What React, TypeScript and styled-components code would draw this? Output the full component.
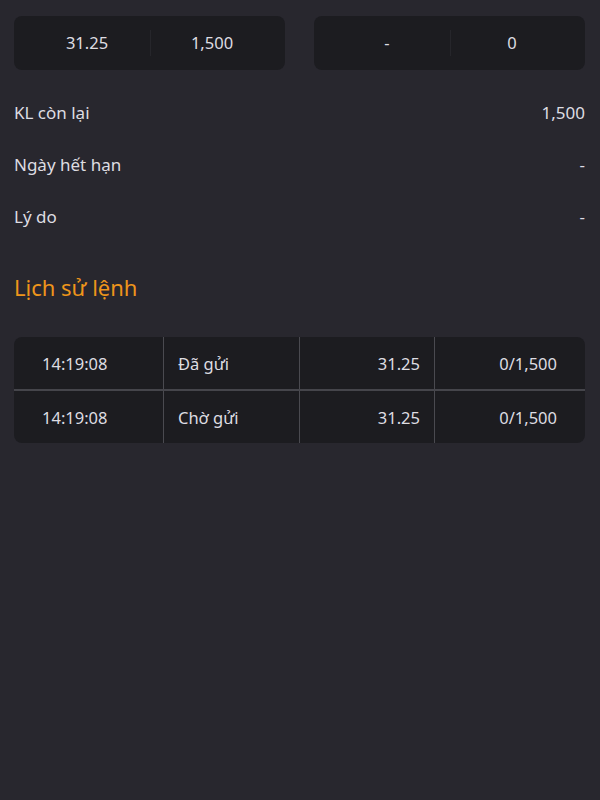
import React from "react";
import styled, { createGlobalStyle } from "styled-components";

const Global = createGlobalStyle`
  html, body { margin: 0; padding: 0; background: #28272e; }
  body { font-family: "Noto Sans", "Liberation Sans", sans-serif; color: #dedde2; }
  #root { min-height: 800px; background: #28272e; }
`;

const Page = styled.div`
  padding: 16px 15px 0 14px;
  display: flex;
  flex-direction: column;
`;

const CardRow = styled.div`
  display: grid;
  grid-template-columns: 1fr 1fr;
  gap: 29px;
`;

const Card = styled.div`
  height: 54px;
  background: #1c1c20;
  border-radius: 8px;
  display: grid;
  grid-template-columns: 136px 1fr;
  align-items: center;
`;

const CardCell = styled.div<{ $side: "l" | "r" }>`
  text-align: center;
  font-size: 16.5px;
  padding: ${(p) => (p.$side === "l" ? "0 0 0 10px" : "0 12px 0 0")};
  border-left: ${(p) => (p.$side === "r" ? "1px solid #26262b" : "none")};
  line-height: 26px;
`;

const InfoList = styled.div`
  margin-top: 16px;
  display: flex;
  flex-direction: column;
`;

const InfoRow = styled.div`
  height: 52px;
  display: flex;
  align-items: center;
  justify-content: space-between;
  font-size: 17px;
`;

const Title = styled.h2`
  margin: 30px 0 0;
  font-size: 22px;
  line-height: 30px;
  font-weight: 400;
  color: #ee951b;
`;

const Table = styled.div`
  margin-top: 35px;
  background: #1c1c20;
  border-radius: 8px;
  overflow: hidden;
`;

const TRow = styled.div<{ $first?: boolean }>`
  display: grid;
  grid-template-columns: 150px 136px 135px 1fr;
  height: 52px;
  border-top: ${(p) => (p.$first ? "none" : "2px solid #45454b")};
`;

const TCell = styled.div<{ $align: "left" | "right"; $pad: string; $last?: boolean }>`
  display: flex;
  align-items: center;
  justify-content: ${(p) => (p.$align === "left" ? "flex-start" : "flex-end")};
  padding: ${(p) => p.$pad};
  font-size: 16.5px;
  border-right: ${(p) => (p.$last ? "none" : "1px solid #4a4a50")};
`;

const history = [
  { time: "14:19:08", status: "Đã gửi", price: "31.25", qty: "0/1,500" },
  { time: "14:19:08", status: "Chờ gửi", price: "31.25", qty: "0/1,500" },
];

export default function App() {
  return (
    <>
      <Global />
      <Page>
        <CardRow>
          <Card>
            <CardCell $side="l">31.25</CardCell>
            <CardCell $side="r">1,500</CardCell>
          </Card>
          <Card>
            <CardCell $side="l">-</CardCell>
            <CardCell $side="r">0</CardCell>
          </Card>
        </CardRow>
        <InfoList>
          <InfoRow>
            <span>KL còn lại</span>
            <span>1,500</span>
          </InfoRow>
          <InfoRow>
            <span>Ngày hết hạn</span>
            <span>-</span>
          </InfoRow>
          <InfoRow>
            <span>Lý do</span>
            <span>-</span>
          </InfoRow>
        </InfoList>
        <Title>Lịch sử lệnh</Title>
        <Table>
          {history.map((h, i) => (
            <TRow key={i} $first={i === 0}>
              <TCell $align="left" $pad="0 0 0 28px">{h.time}</TCell>
              <TCell $align="left" $pad="0 0 0 14px">{h.status}</TCell>
              <TCell $align="right" $pad="0 14px 0 0">{h.price}</TCell>
              <TCell $align="right" $pad="0 28px 0 0" $last>{h.qty}</TCell>
            </TRow>
          ))}
        </Table>
      </Page>
    </>
  );
}
